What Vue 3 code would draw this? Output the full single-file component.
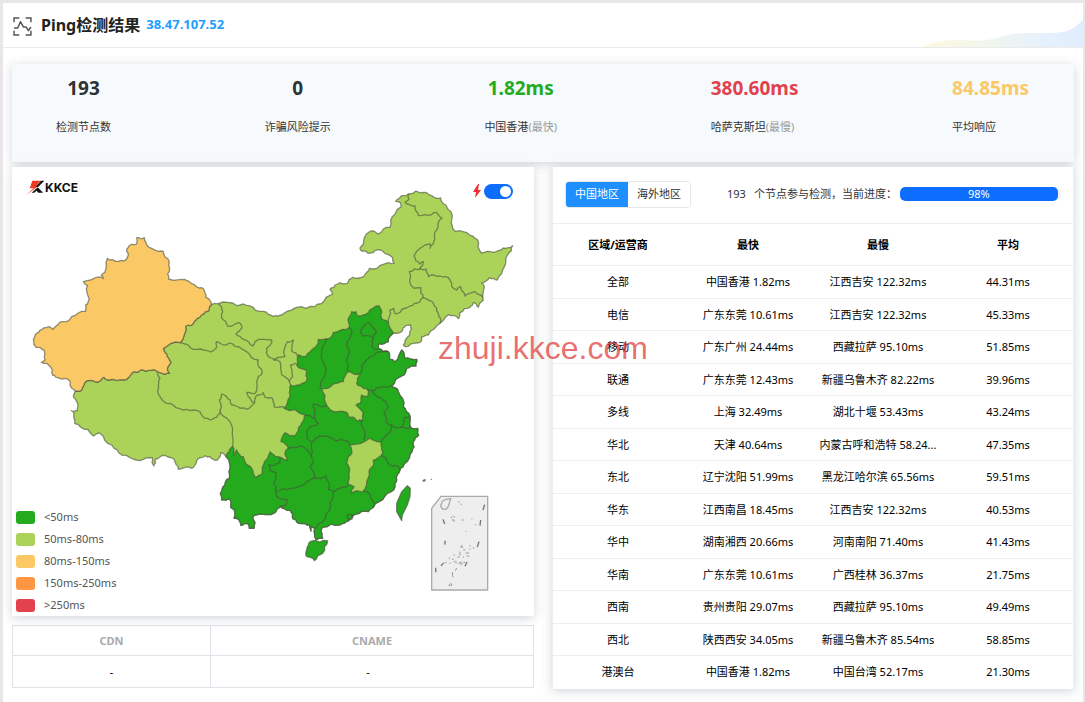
<script setup>
import { ref } from 'vue'

const stats = [
  { value: '193', label: '检测节点数', tone: 'dark' },
  { value: '0', label: '诈骗风险提示', tone: 'dark' },
  { value: '1.82ms', label: '中国香港', note: '(最快)', tone: 'green' },
  { value: '380.60ms', label: '哈萨克斯坦', note: '(最慢)', tone: 'red' },
  { value: '84.85ms', label: '平均响应', tone: 'amber' },
]

const legend = [
  { label: '<50ms', tone: 'l1' },
  { label: '50ms-80ms', tone: 'l2' },
  { label: '80ms-150ms', tone: 'l3' },
  { label: '150ms-250ms', tone: 'l4' },
  { label: '>250ms', tone: 'l5' },
]

const rows = [
  ['全部', '中国香港 1.82ms', '江西吉安 122.32ms', '44.31ms'],
  ['电信', '广东东莞 10.61ms', '江西吉安 122.32ms', '45.33ms'],
  ['移动', '广东广州 24.44ms', '西藏拉萨 95.10ms', '51.85ms'],
  ['联通', '广东东莞 12.43ms', '新疆乌鲁木齐 82.22ms', '39.96ms'],
  ['多线', '上海 32.49ms', '湖北十堰 53.43ms', '43.24ms'],
  ['华北', '天津 40.64ms', '内蒙古呼和浩特 58.24...', '47.35ms'],
  ['东北', '辽宁沈阳 51.99ms', '黑龙江哈尔滨 65.56ms', '59.51ms'],
  ['华东', '江西南昌 18.45ms', '江西吉安 122.32ms', '40.53ms'],
  ['华中', '湖南湘西 20.66ms', '河南南阳 71.40ms', '41.43ms'],
  ['华南', '广东东莞 10.61ms', '广西桂林 36.37ms', '21.75ms'],
  ['西南', '贵州贵阳 29.07ms', '西藏拉萨 95.10ms', '49.49ms'],
  ['西北', '陕西西安 34.05ms', '新疆乌鲁木齐 85.54ms', '58.85ms'],
  ['港澳台', '中国香港 1.82ms', '中国台湾 52.17ms', '21.30ms'],
]

const progress = ref(98)
const fast = ref(true)
const area = ref('cn')

// Splits each segment and nudges the midpoint, keyed on position, so that
// shared borders stay identical whichever region draws them.
function rough(text, closed = false) {
  const pts = text.trim().split(/\s+/).map((p) => p.split(',').map(Number))
  if (closed) pts.push(pts[0])
  const out = [pts[0]]
  const split = (a, b, depth) => {
    const dx = b[0] - a[0]
    const dy = b[1] - a[1]
    if (depth > 0 && Math.hypot(dx, dy) > 9) {
      const flip = dx > 0 || (dx === 0 && dy > 0) ? 1 : -1
      const mx = (a[0] + b[0]) / 2
      const my = (a[1] + b[1]) / 2
      const k = Math.sin(mx * 12.9 + my * 78.2) * 0.14 * flip
      const m = [Math.round(mx - dy * k), Math.round(my + dx * k)]
      split(a, m, depth - 1)
      split(m, b, depth - 1)
    } else {
      out.push(b)
    }
  }
  for (let i = 1; i < pts.length; i++) split(pts[i - 1], pts[i], 2)
  return 'M' + out.map((p) => p.join(' ')).join('L') + (closed ? 'Z' : '')
}

const xjWest =
  '226,1174 212,1160 206,1140 180,1136 158,1125 156,1108 140,1090 124,1087 135,1080 132,1050 108,1042 100,1020 110,1000 130,985 147,980 158,988 178,968 206,962 215,950 257,934 256,915 268,898 262,857 250,845 292,831 310,836 304,825 322,775 340,780 372,783 383,770 380,748 388,737 408,733 410,713 433,713 438,728 462,749 490,754 496,772 508,785 503,822 506,837 568,845 597,864 610,866 618,892 634,913'
const xjEast =
  '626,932 608,943 588,960 574,976 557,978 541,1028 490,1046 500,1062 513,1087 503,1102 508,1120 480,1118 452,1111 425,1109 397,1118 388,1130 350,1142 322,1140 312,1132 295,1146 262,1142 245,1170'
const north =
  '655,911 710,917 750,917 770,932 805,943 835,948 855,938 890,922 945,920 965,910 998,882 990,868 1005,855 1020,848 1042,850 1058,832 1092,828 1108,805 1150,793 1182,790 1178,773 1148,753 1125,751 1110,760 1085,753 1080,744 1112,693 1135,702 1170,682 1185,642 1203,620 1201,608 1187,604 1205,587 1225,582 1272,577 1302,592 1322,594 1338,615 1355,660 1366,694 1410,706 1435,725 1438,750 1444,759 1480,757 1510,744 1538,737 1523,765 1513,800 1492,840 1468,833 1445,848 1452,865 1450,900 1435,922 1420,908 1410,922 1380,938 1375,956 1345,944 1320,970 1285,1005 1265,1010 1260,1027 1225,1039 1210,1036 1217,1018 1234,988 1232,975 1218,976 1205,995 1180,1000'
const coast =
  '1165,1025 1137,1030 1135,1045 1165,1055 1170,1078 1185,1085 1205,1050 1212,1060 1215,1075 1250,1078 1248,1098 1220,1105 1205,1128 1185,1142 1175,1157 1195,1175 1210,1220 1230,1248 1232,1282 1253,1285 1256,1305 1240,1325 1236,1355 1215,1390 1200,1410 1190,1440 1185,1460 1155,1488 1120,1522 1105,1535 1065,1543 1045,1563 1020,1575 968,1582 963,1595 968,1615 948,1618 945,1585 935,1578 933,1593 930,1576 895,1570 878,1555 872,1532 850,1525 840,1518 825,1538 805,1543 775,1543 758,1552 762,1585 748,1585 745,1572 722,1576 715,1558 702,1555 703,1530 692,1522 688,1497 665,1500 668,1462 688,1435 690,1395 678,1370'
const tibetSouth =
  '662,1358 652,1380 630,1370 615,1367 590,1382 575,1405 535,1408 522,1377 485,1367 467,1377 462,1398 457,1373 430,1378 390,1373 350,1348 335,1335 300,1300 280,1308 240,1280 224,1270 222,1240 214,1232 232,1232 230,1205 220,1190 226,1174'
const darkInner =
  '688,1355 698,1340 700,1368 710,1350 722,1370 730,1370 758,1410 765,1432 787,1422 787,1400 803,1375 810,1355 825,1370 862,1380 855,1360 865,1345 843,1325 855,1298 885,1308 895,1285 908,1265 915,1245 852,1225 862,1210 870,1185 872,1155 900,1155 920,1142 920,1112 890,1095 895,1065 918,1070 930,1055 955,1018 970,1018 995,1010 1000,997 1030,988 1048,982 1048,950 1055,935 1068,935 1072,947 1105,938 1112,928 1125,920 1138,918 1145,932 1147,958 1165,968 1180,1000'

const land = rough(`634,913 ${north} ${coast} ${tibetSouth} ${xjEast.split(' ').reverse().join(' ')}`, true)
const xinjiang = rough(`${xjWest} ${xjEast}`, true)
const dark = rough(`${coast} ${darkInner}`, true)
const henan = rough(
  '965,1167 1000,1152 1030,1145 1043,1115 1080,1122 1070,1150 1085,1160 1102,1168 1105,1188 1085,1185 1080,1210 1068,1215 1088,1235 1088,1260 1070,1263 1062,1253 1045,1250 1040,1237 995,1232 980,1215 975,1190',
  true,
)
const jiangxi = rough(
  '1050,1335 1108,1315 1130,1325 1143,1328 1148,1355 1138,1370 1120,1380 1118,1400 1107,1415 1100,1455 1090,1475 1053,1480 1062,1460 1045,1455 1048,1415 1040,1390 1052,1365',
  true,
)
const hainan = rough('935,1623 983,1622 968,1660 943,1682 920,1670 922,1640', true)
const taiwan = 'M1222 1457L1231 1465L1230 1490L1222 1515L1207 1545L1205 1562L1190 1535L1190 1510L1205 1475Z'

const borders = [
  '541,1028 558,1032 590,1048 632,1056 648,1045 650,1025 680,1034 695,1030 740,1055 775,1080 787,1117 770,1145 765,1180 740,1177 752,1198 762,1210 740,1228 720,1225 695,1215 680,1190 665,1182 658,1200 660,1230',
  '472,1120 480,1135 475,1155 480,1190 500,1210 520,1215 560,1228 600,1235 615,1255 630,1260 650,1252 660,1230 690,1265 697,1295 698,1340',
  '655,911 668,935 665,955 683,978 718,968 725,985 708,1002 730,1018 758,1038 765,1025 815,1020 800,1045 805,1070 822,1080 840,1085 845,1125 868,1145 878,1130 872,1095 890,1090',
  '822,1080 855,1070 862,1025 880,1020 875,1052 895,1068',
  '868,1145 872,1155',
  '765,1210 772,1185 790,1178 795,1192 818,1195 822,1220 855,1222',
  '1225,582 1227,598 1215,607 1245,618 1255,647 1295,644 1310,637 1326,655 1310,690 1305,715 1290,745 1290,732 1242,768 1260,792 1270,785 1260,807 1278,807 1285,830 1320,828 1350,840 1355,860 1370,870 1382,860 1395,888 1425,875 1450,893',
  '1260,807 1228,815 1242,865 1262,862 1270,892 1290,902 1300,910 1315,940 1320,970',
  '1270,892 1260,905 1230,918 1188,942 1182,925 1170,930 1168,950 1165,968',
  '980,1015 965,1050 970,1085 960,1167',
  '1048,982 1055,1000 1040,1025 1048,1055 1038,1080 1043,1115',
  '1105,968 1082,990 1090,1008 1120,1015 1130,995 1115,978 1105,968',
  '1120,1015 1115,1040 1135,1048',
  '1080,1120 1085,1095 1110,1070 1135,1055 1165,1055',
  '1102,1168 1125,1170 1145,1160 1175,1157',
  '1115,1170 1145,1195 1165,1220 1152,1240 1158,1265 1175,1275 1205,1282 1232,1282',
  '1205,1282 1212,1265 1215,1252 1230,1248',
  '1175,1275 1165,1300 1143,1325',
  '1088,1260 1083,1275 1095,1300 1090,1320',
  '980,1215 940,1213 945,1228 943,1245 955,1270 920,1295 920,1310 935,1328 945,1315 975,1308 1005,1322 1038,1322 1050,1335',
  '915,1245 943,1255',
  '865,1345 900,1338 920,1350 933,1365 935,1328',
  '933,1365 940,1390 930,1400 942,1435 920,1445 890,1462 870,1465 828,1475',
  '840,1372 840,1388 805,1395 810,1412 828,1418 822,1445 828,1475 830,1490 862,1498 858,1515 840,1518',
  '942,1435 978,1428 985,1468 1000,1475 990,1510 985,1535 955,1572 945,1585',
  '1000,1475 1025,1462 1045,1455',
  '1090,1472 1110,1485 1120,1522',
  '1145,1368 1163,1388 1195,1400 1200,1410',
].map((b) => rough(b))
</script>

<template>
  <main class="page">
    <header class="head">
      <svg class="head-icon" viewBox="0 0 18 18" fill="none" stroke="#555" stroke-width="1.4">
        <path d="M1 5V1h5M12 1h5v4M17 13v4h-5M6 17H1v-4" />
        <path d="M1 10.500h3.500L7 4.500l3 5h2.500l2 3.500 2.500-3.500" stroke-linejoin="round" />
      </svg>
      <h1>Ping检测结果</h1>
      <a class="ip" href="#">38.47.107.52</a>
      <svg class="wave" viewBox="0 0 162 30">
        <defs>
          <linearGradient id="waveFill">
            <stop offset="0" stop-color="#fff8e1" />
            <stop offset="0.350" stop-color="#f3f6ea" />
            <stop offset="0.750" stop-color="#e6f1fc" />
            <stop offset="1" stop-color="#e1edff" />
          </linearGradient>
        </defs>
        <path d="M0 30C14 24 26 23 38 23S60 25 76 21S92 16 118 16S148 16 162 3V30Z" fill="url(#waveFill)" />
      </svg>
    </header>

    <div class="body">
      <section class="stats">
        <div v-for="s in stats" :key="s.label" class="stat">
          <strong :class="s.tone">{{ s.value }}</strong>
          <span>{{ s.label }}<em v-if="s.note">{{ s.note }}</em></span>
        </div>
      </section>

      <div class="columns">
        <div class="left">
          <section class="card map-card">
            <svg class="map" viewBox="36 501 1566 1347">
              <g stroke="#4a5240" stroke-opacity=".6" stroke-width="4" stroke-linejoin="round">
                <path :d="land" fill="#acd359" />
                <path :d="xinjiang" fill="#fac864" />
                <path :d="dark" fill="#24aa1d" />
                <path :d="henan" fill="#acd359" />
                <path :d="jiangxi" fill="#acd359" />
                <path :d="hainan" fill="#24aa1d" />
                <path :d="taiwan" fill="#24aa1d" />
                <path v-for="b in borders" :key="b" :d="b" fill="none" />
                <circle cx="1050" cy="1551" r="8" fill="none" />
              </g>
              <g transform="translate(960 1260)" fill="none" stroke="#777">
                <path d="M308 181l5-3 5 1-3 5-6 1z" fill="#777" />
                <path d="M332 178h4" stroke-width="3" />
                <path d="M335 265L363 229H503V510H335Z" fill="#eee" stroke="#aaa" stroke-width="4" />
                <path d="M368 243l10-5 14-2-3 10-4 13-7 9-10-1-6-8 3-10z" stroke="#aaa" stroke-width="4" />
                <path
                  d="M494 254l-5 16M482 300l-2 17M477 365l-5 16M369 298l5 14M376 362l-2 12M347 443v14M441 426l-6 13M371 429l-8 8"
                  stroke-width="4"
                />
                <path
                  d="M392 292h5M400 287l4 6M395 300h8M402 300v5M425 300h6M424 251v4M415 246h4M454 297h3M465 314h4M436 334h3M424 375l5 8M420 381h6M450 375v4M458 384h5M448 387h3M430 390h6M437 399h10M420 395v6M400 405h4M412 411h7M418 404h5M440 408h8M428 411h4M388 413v4M374 428h5M388 430h4M400 427l5-5M408 424v7M415 430l10-4M420 433l8-2M430 427h6M396 418h5M398 456l-1 10 3 6M386 496l6-6 4 5-8 3M410 444l-4 8"
                  stroke="#999"
                  stroke-width="3"
                />
              </g>
            </svg>

            <div class="map-top">
              <div class="brand">
                <svg viewBox="0 0 60 54">
                  <path d="M20 4H46L36 16H45L0 50L24 28H12Z" fill="#ee3a22" />
                  <path d="M47 4H58L38 24L31 24ZM37 25L54 42H39L33 36L26 42H18Z" fill="#111" />
                </svg>
                <b>KKCE</b>
              </div>
              <label class="toggle">
                <svg viewBox="0 0 8 14"><path d="M5 0L0 8h3L2 14l6-8H5l1-6z" fill="#ee2c36" /></svg>
                <input v-model="fast" type="checkbox" role="switch" aria-label="加速" />
              </label>
            </div>

            <ul class="legend">
              <li v-for="l in legend" :key="l.label"><i :class="l.tone"></i>{{ l.label }}</li>
            </ul>
          </section>

          <table class="cname">
            <thead>
              <tr><th class="cdn">CDN</th><th>CNAME</th></tr>
            </thead>
            <tbody>
              <tr><td>-</td><td>-</td></tr>
            </tbody>
          </table>
        </div>

        <section class="card result">
          <div class="bar">
            <div class="tabs">
              <button type="button" :class="{ on: area === 'cn' }" @click="area = 'cn'">中国地区</button>
              <button type="button" :class="{ on: area === 'os' }" @click="area = 'os'">海外地区</button>
            </div>
            <span class="count">193</span>
            <span class="tip">个节点参与检测，当前进度：</span>
            <div class="track" role="progressbar" :aria-valuenow="progress">
              <div class="fill" :style="{ width: progress + '%' }">{{ progress }}%</div>
            </div>
          </div>
          <table class="grid">
            <thead>
              <tr><th>区域/运营商</th><th>最快</th><th>最慢</th><th>平均</th></tr>
            </thead>
            <tbody>
              <tr v-for="r in rows" :key="r[0]">
                <td v-for="(c, i) in r" :key="i">{{ c }}</td>
              </tr>
            </tbody>
          </table>
        </section>
      </div>
    </div>
    <div class="watermark">zhuji.kkce.com</div>
  </main>
</template>

<style>
body {
  background: #e8e6e6;
}
</style>

<style scoped>
* {
  box-sizing: border-box;
}
.page {
  position: relative;
  margin: 3px 2px 0 3px;
  min-height: calc(100vh - 3px);
  background: #fff;
  color: #333;
  font: 11px/16px 'Noto Sans', 'Noto Sans CJK SC', sans-serif;
}
.head {
  position: relative;
  display: flex;
  align-items: center;
  height: 45px;
  padding-left: 10px;
  border-bottom: 1px solid #ebebeb;
}
.head-icon {
  width: 19px;
  height: 19px;
  margin-top: 3px;
}
h1 {
  margin: 0 6px 0 9px;
  color: #222;
  font-size: 16px;
  line-height: 24px;
}
.ip {
  color: #1e9fff;
  font-size: 13px;
  font-weight: 700;
  line-height: 20px;
  padding-bottom: 2px;
  text-decoration: none;
}
.wave {
  position: absolute;
  right: 0;
  bottom: 0;
  width: 162px;
  height: 30px;
}
.body {
  padding: 16px 9px 13px;
}
.stats {
  display: flex;
  justify-content: space-between;
  height: 98px;
  padding: 12px 45px 0 44px;
  background: #f6fafd;
  box-shadow: 0 2px 10px rgba(60, 80, 90, 0.24);
}
.stat {
  display: flex;
  flex-direction: column;
  gap: 19px;
}
.stat strong {
  font-size: 19px;
  line-height: 24px;
  text-align: center;
}
.stat em {
  color: #999;
  font-style: normal;
}
.dark {
  color: #303133;
}
.green {
  color: #24aa1d;
}
.red {
  color: #e2414d;
}
.amber {
  color: #fac864;
}
.columns {
  display: grid;
  grid-template-columns: 1fr 1fr;
  gap: 18px;
  margin-top: 5px;
}
.card {
  position: relative;
  background: #fff;
  box-shadow: 0 2px 10px rgba(60, 80, 90, 0.24);
}
.result {
  border: 0 solid #eee;
  border-width: 0 1px;
}
.left {
  display: flex;
  flex-direction: column;
  gap: 9px;
}
.map {
  display: block;
  width: 100%;
}
.map-top {
  position: absolute;
  inset: 12px 21px auto 14px;
  display: flex;
  justify-content: space-between;
}
.brand {
  display: flex;
}
.brand svg {
  width: 19px;
  height: 18px;
}
.brand b {
  color: #111;
  font: 700 12px/18px Inter, sans-serif;
}
.toggle {
  display: flex;
  align-items: center;
  gap: 3px;
  height: 24px;
}
.toggle svg {
  width: 8px;
  height: 14px;
}
.toggle input {
  appearance: none;
  width: 29px;
  height: 15px;
  margin: 0;
  border-radius: 8px;
  background: #bbb;
}
.toggle input::before {
  content: '';
  display: block;
  width: 11px;
  height: 11px;
  margin: 2px;
  border-radius: 50%;
  background: #fff;
}
.toggle input:checked {
  background: #0d6efd;
}
.toggle input:checked::before {
  margin-left: 16px;
}
.legend {
  position: absolute;
  left: 4px;
  bottom: 0;
  margin: 0;
  padding: 0;
  color: #555;
  line-height: 22px;
  list-style: none;
}
.legend li {
  display: flex;
  align-items: center;
  gap: 9px;
}
.legend i {
  width: 19px;
  height: 13px;
  border-radius: 3px;
}
.l1 {
  background: #24aa1d;
}
.l2 {
  background: #acd359;
}
.l3 {
  background: #fac864;
}
.l4 {
  background: #ff9644;
}
.l5 {
  background: #e2414d;
}
table {
  width: 100%;
  border-collapse: collapse;
  table-layout: fixed;
  text-align: center;
}
th,
td {
  padding: 0;
}
.cname th,
.cname td {
  border: 1px solid #dfe2e8;
}
.cname th {
  height: 30px;
  color: #aaa;
}
.cname td {
  height: 32px;
  color: #000;
}
.cname td:last-child {
  padding-right: 8px;
}
.cdn {
  width: 38%;
}
.bar {
  display: flex;
  align-items: center;
  height: 56px;
  padding: 0 12px;
}
.tabs {
  display: flex;
  margin: 0 36px 2px 0;
  border: 1px solid #e6e6e6;
  border-radius: 4px;
}
.tabs button {
  height: 25px;
  padding: 0 9px;
  border: 0;
  background: #fff;
  color: #333;
  font: inherit;
  border-radius: 0 3px 3px 0;
}
.tabs .on {
  border-radius: 3px 0 0 3px;
  background: #1e8fff;
  color: #fff;
}
.count {
  margin: 0 8px 3px 0;
}
.tip {
  margin-bottom: 3px;
  white-space: nowrap;
}
.track {
  flex: 1;
  height: 14px;
  margin: 0 0 2px 3px;
  border-radius: 5px;
  background: #f1f3f5;
  overflow: hidden;
}
.fill {
  height: 14px;
  border-radius: 5px;
  background: #0d6efd;
  color: #fff;
  line-height: 13px;
  text-align: center;
}
.grid {
  color: #000;
}
.grid tr {
  border-top: 1px solid #eee;
}
.grid th {
  height: 42px;
}
.grid td {
  height: 32px;
  white-space: nowrap;
}
.grid tbody tr:nth-child(odd) td {
  height: 33px;
}
.watermark {
  position: absolute;
  top: 327px;
  left: 435px;
  color: rgba(222, 40, 40, 0.68);
  font: 32px/37px 'Liberation Sans', sans-serif;
  pointer-events: none;
}
</style>
